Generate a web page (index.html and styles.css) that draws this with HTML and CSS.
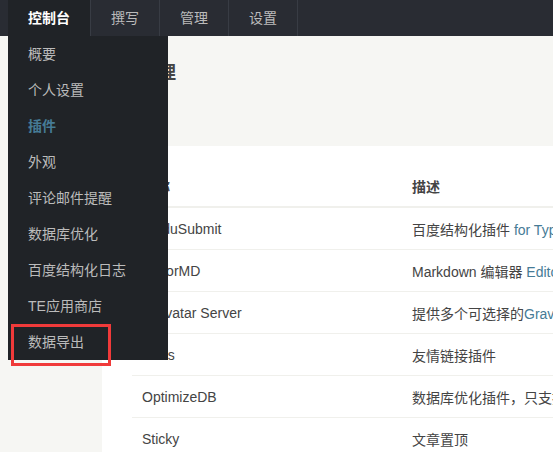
FILE: index.html
```html
<!DOCTYPE html>
<html lang="zh-CN">
<head>
<meta charset="utf-8">
<title>插件管理</title>
<link rel="stylesheet" href="styles.css">
</head>
<body>
<header class="topbar">
  <nav class="tabs">
    <a class="tab active">控制台</a>
    <a class="tab">撰写</a>
    <a class="tab">管理</a>
    <a class="tab">设置</a>
  </nav>
  <ul class="dropdown">
    <li class="item">概要</li>
    <li class="item">个人设置</li>
    <li class="item current">插件</li>
    <li class="item">外观</li>
    <li class="item">评论邮件提醒</li>
    <li class="item">数据库优化</li>
    <li class="item">百度结构化日志</li>
    <li class="item">TE应用商店</li>
    <li class="item marked">数据导出<span class="highlight"></span></li>
  </ul>
</header>
<main class="main">
  <div class="title-area">
    <h2 class="page-title">插件管理</h2>
  </div>
  <section class="panel">
    <table class="plugins">
      <colgroup><col class="c-name"><col class="c-desc"></colgroup>
      <thead>
        <tr><th>名称</th><th>描述</th></tr>
      </thead>
      <tbody>
        <tr><td>BaiduSubmit</td><td>百度结构化插件 <a>for Typecho</a></td></tr>
        <tr><td>EditorMD</td><td>Markdown 编辑器 <a>Editor.md</a> for Typecho</td></tr>
        <tr><td>Gravatar Server</td><td>提供多个可选择的<a>Gravatar</a>服务器</td></tr>
        <tr><td>Links</td><td>友情链接插件</td></tr>
        <tr><td>OptimizeDB</td><td>数据库优化插件，只支持MySQL数据库</td></tr>
        <tr><td>Sticky</td><td>文章置顶</td></tr>
      </tbody>
    </table>
  </section>
</main>
</body>
</html>
```

FILE: styles.css
```css
* { box-sizing: border-box; }

html, body {
  margin: 0;
  padding: 0;
}

body {
  width: 553px;
  height: 452px;
  overflow: hidden;
  background: #f6f6f3;
  color: #444;
  font-family: "Liberation Sans", "Noto Sans CJK SC", sans-serif;
  font-size: 14px;
  position: relative;
}

.topbar {
  position: relative;
  height: 36px;
  background: #292c33;
  padding-left: 8px;
}

.tabs {
  display: flex;
  height: 36px;
}

.tab {
  display: block;
  padding: 0 20px;
  line-height: 36px;
  color: #bbb;
  border-right: 1px solid #383c44;
  text-decoration: none;
}

.tab.active {
  background: #202327;
  color: #fff;
  font-weight: bold;
}

.dropdown {
  position: absolute;
  left: 8px;
  top: 36px;
  width: 160px;
  margin: 0;
  padding: 0;
  list-style: none;
  background: #202327;
  z-index: 10;
}

.item {
  position: relative;
  height: 36px;
  line-height: 36px;
  padding-left: 20px;
  color: #bbb;
}

.item.current {
  color: #467b96;
  font-weight: bold;
}

.highlight {
  position: absolute;
  left: 3px;
  top: 0;
  width: 100px;
  height: 42px;
  border: 3px solid #f03a3a;
}

.title-area {
  height: 110px;
  padding: 25px 0 0 104px;
}

.page-title {
  margin: 0;
  font-size: 18px;
  line-height: 24px;
  font-weight: bold;
  color: #444;
}

.panel {
  margin-left: 102px;
  background: #fff;
  padding: 20px 0 0 30px;
  height: 306px;
}

.plugins {
  width: 720px;
  table-layout: fixed;
  border-collapse: collapse;
}

.c-name { width: 270px; }
.c-desc { width: 450px; }

.plugins th,
.plugins td {
  text-align: left;
  padding: 0 10px;
  height: 41px;
  white-space: nowrap;
  overflow: hidden;
}

.plugins th {
  font-weight: bold;
  color: #444;
  border-bottom: 2px solid #f0f0ec;
}

.plugins td {
  color: #444;
  height: 42px;
  padding-top: 2px;
  border-bottom: 1px solid #f0f0ec;
}

.plugins a {
  color: #467b96;
  text-decoration: none;
}
```
